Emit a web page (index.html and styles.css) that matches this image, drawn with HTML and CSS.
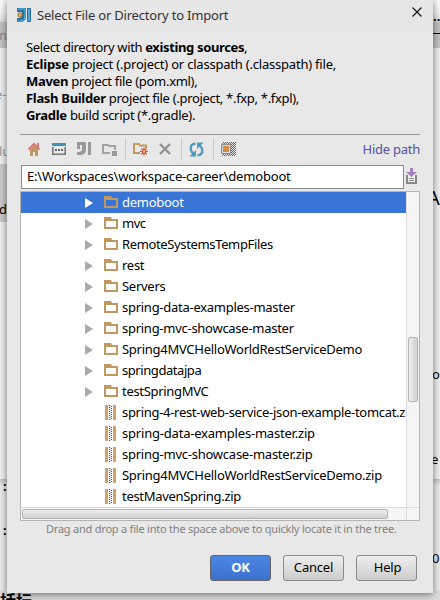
FILE: index.html
```html
<!DOCTYPE html>
<html lang="en">
<head>
<meta charset="utf-8">
<title>Select File or Directory to Import</title>
<link rel="stylesheet" href="styles.css">
</head>
<body>
<svg width="0" height="0" class="defs" aria-hidden="true">
  <symbol id="folder" viewBox="0 0 14 12"><path fill="#c09861" fill-rule="evenodd" d="M0 0h7l1 2h6v10H0zM2 4v6h10V4z"/></symbol>
  <symbol id="zip" viewBox="0 0 11 15"><path fill="#cda368" d="M0 0h3v15H0zM8 0h3v15H8z"/><path fill="none" stroke="#ddd" d="M5.5 0v15"/><path fill="none" stroke="#555" stroke-dasharray="1 1" d="M4.5 0v15M6.5 1v14"/></symbol>
  <symbol id="arrow" viewBox="0 0 8 10"><path fill="currentColor" d="M0 0l8 5-8 5z"/></symbol>
</svg>
<div class="backdrop">
  <div class="band top"></div><div class="band head"></div><div class="band side"></div><div class="band low"></div><div class="band foot"></div>
  <div class="rule"></div>
  <span class="bg b1">nt</span><span class="bg b2">e-</span><span class="bg b3">lu</span><span class="bg b4">de</span>
  <span class="bg b5">:</span><span class="bg b6">:</span><span class="bg b7">A</span><span class="bg b8">o</span><span class="bg b9">e</span><span class="bg b10">0</span><span class="bg b11">括坛</span><span class="bg b12">..</span>
</div>
<main class="dialog">
  <header class="title">
    <svg width="15" height="15" viewBox="0 0 15 15"><path d="M0 0h9v8q0 6-6 6H0v-4h2q3 0 3-3V4H0z" fill="#2575a7"/><path d="M1 1h7v7q0 5-5 5H1" fill="none" stroke="#64b7e1"/><circle cx="3" cy="7" r="2.2" fill="#edb04d" stroke="#8a6a3a"/><path d="M10.5.5h3v13h-3z" fill="#4caade" stroke="#236b9c"/></svg>
    <h1>Select File or Directory to Import</h1>
    <svg class="close" width="10" height="10" viewBox="0 0 10 10"><path d="M.5.5l9 9M9.5.5l-9 9" stroke="#111" stroke-width="1.2"/></svg>
  </header>
  <div class="desc">
    <p class="d1">Select directory with <b>existing sources</b>,</p>
    <p class="d2"><b>Eclipse</b> project (.project) or classpath (.classpath) file,</p>
    <p class="d3"><b>Maven</b> project file (pom.xml),</p>
    <p class="d4"><b>Flash Builder</b> project file (.project, *.fxp, *.fxpl),</p>
    <p class="d5"><b>Gradle</b> build script (*.gradle).</p>
  </div>
  <div class="toolbar">
    <svg width="12" height="14" viewBox="0 0 12 14"><path fill="#c09861" d="M2 7l4-4 4 4v7H7v-4H5v4H2z"/><path d="M.5 7.5L6 2l5.5 5.5" fill="none" stroke="#db7777" stroke-width="2"/><path fill="#db7777" d="M9 1h2v4H9z"/></svg>
    <svg class="i2" width="14" height="12" viewBox="0 0 14 12"><path fill="#3c91bd" d="M0 0h14v3H0z"/><path fill="none" stroke="#777" stroke-width="1.6" d="M.8 4v7.200h12.400V4"/><path fill="#666" d="M3 6h2v2H3zM6 6h2v2H6zM9 6h2v2H9z"/></svg>
    <svg class="i3" width="14" height="14" viewBox="0 0 14 14"><path fill="#999" fill-rule="evenodd" d="M0 0h9v7q0 6-6 6H0v-3h2q3 0 3-3V3H3v4H0zM11 0h3v13h-3z"/></svg>
    <svg class="i4" width="15" height="13" viewBox="0 0 15 13"><path d="M8 10H1V2h5l1 1h6v4" fill="none" stroke="#a1a1a1" stroke-width="2"/><path fill="#999" d="M10 8h5v5h-5z"/></svg>
    <i></i>
    <svg class="i5" width="16" height="14" viewBox="0 0 16 14"><path d="M7 11H1V2h5l1 1.500h6V6" fill="none" stroke="#c5985c" stroke-width="2"/><path d="M11 5.500v8M7 9.500h8M8.200 6.700l5.600 5.600M13.800 6.700l-5.600 5.600" stroke="#ce4932" stroke-width="1.200"/><circle cx="11" cy="9.500" r="1.800" fill="#efc27e" stroke="#ce4932"/></svg>
    <svg class="i6" width="12" height="12" viewBox="0 0 12 12"><path d="M1 1l10 10M11 1L1 11" stroke="#929292" stroke-width="2.4"/></svg>
    <i class="s2"></i>
    <svg class="i7" width="15" height="15" viewBox="0 0 15 15"><path d="M6.500 1.700Q1.200 2 1.700 7q.3 3 3 4.500M8.500 13.300Q13.800 13 13.300 8q-.3-3-3-4.500" fill="none" stroke="#519abf" stroke-width="2.400"/><path fill="#519abf" d="M7 8v6.500H.500zM8 7V.500h6.500z"/></svg>
    <i class="s3"></i>
    <svg class="i8" width="15" height="14" viewBox="0 0 15 14"><defs><pattern id="dots" width="2" height="2" patternUnits="userSpaceOnUse"><path fill="#666" d="M0 0h1v1H0zM1 1h1v1H1z"/></pattern></defs><path fill="url(#dots)" d="M1 0h14v14H1z"/><path fill="#ddd" stroke="#888" d="M.5 2.500h9v9h-9z"/><path fill="#d18d48" d="M2 4h6v6H2z"/></svg>
    <a>Hide path</a>
  </div>
  <div class="path">
    <div class="field"><span>E:\Workspaces\workspace-career\demoboot</span></div>
    <svg width="11" height="16" viewBox="0 0 11 16"><path d="M1 7v8h9V7" fill="#eee" stroke="#888" stroke-width="2"/><path d="M3 10.500h5M3 12.500h5" stroke="#888"/><path fill="#a67fc0" d="M4 0h3v4h4L5.500 9 0 4h4z"/></svg>
  </div>
  <section class="tree">
    <ul>
      <li class="selected"><svg class="ar"><use href="#arrow"/></svg><svg class="fo"><use href="#folder"/></svg><span class="r1">demoboot</span></li>
      <li><svg class="ar"><use href="#arrow"/></svg><svg class="fo"><use href="#folder"/></svg><span class="r2">mvc</span></li>
      <li><svg class="ar"><use href="#arrow"/></svg><svg class="fo"><use href="#folder"/></svg><span class="r3">RemoteSystemsTempFiles</span></li>
      <li><svg class="ar"><use href="#arrow"/></svg><svg class="fo"><use href="#folder"/></svg><span class="r4">rest</span></li>
      <li><svg class="ar"><use href="#arrow"/></svg><svg class="fo"><use href="#folder"/></svg><span class="r5">Servers</span></li>
      <li><svg class="ar"><use href="#arrow"/></svg><svg class="fo"><use href="#folder"/></svg><span class="r6">spring-data-examples-master</span></li>
      <li><svg class="ar"><use href="#arrow"/></svg><svg class="fo"><use href="#folder"/></svg><span class="r7">spring-mvc-showcase-master</span></li>
      <li><svg class="ar"><use href="#arrow"/></svg><svg class="fo"><use href="#folder"/></svg><span class="r8">Spring4MVCHelloWorldRestServiceDemo</span></li>
      <li><svg class="ar"><use href="#arrow"/></svg><svg class="fo"><use href="#folder"/></svg><span class="r9">springdatajpa</span></li>
      <li><svg class="ar"><use href="#arrow"/></svg><svg class="fo"><use href="#folder"/></svg><span class="r10">testSpringMVC</span></li>
      <li class="file"><svg class="zi"><use href="#zip"/></svg><span class="r11">spring-4-rest-web-service-json-example-tomcat.zip</span></li>
      <li class="file"><svg class="zi"><use href="#zip"/></svg><span class="r12">spring-data-examples-master.zip</span></li>
      <li class="file"><svg class="zi"><use href="#zip"/></svg><span class="r13">spring-mvc-showcase-master.zip</span></li>
      <li class="file"><svg class="zi"><use href="#zip"/></svg><span class="r14">Spring4MVCHelloWorldRestServiceDemo.zip</span></li>
      <li class="file"><svg class="zi"><use href="#zip"/></svg><span class="r15">testMavenSpring.zip</span></li>
    </ul>
    <div class="vbar"><div></div></div>
    <div class="hbar"><div></div></div>
    <div class="corner"></div>
  </section>
  <p class="hint">Drag and drop a file into the space above to quickly locate it in the tree.</p>
  <footer><button class="ok">OK</button><button>Cancel</button><button class="help">Help</button></footer>
</main>
</body>
</html>
```
FILE: styles.css
```css
* { box-sizing: border-box; }
body { margin: 0; width: 440px; height: 600px; overflow: hidden; position: relative; background: #f1f1f1; font: 13px/17px "Noto Sans", "Open Sans", sans-serif; color: #000; }
p, h1, ul { margin: 0; padding: 0; }
svg { display: block; flex: none; }
.defs { position: absolute; }
.backdrop { position: absolute; inset: 0; overflow: hidden; }
.band { position: absolute; left: 0; width: 440px; }
.top { top: 0; height: 22px; background: linear-gradient(#fafafa 50%, #ddd); }
.head { top: 22px; height: 26px; background: #c4c4c4; }
.side { top: 164px; height: 58px; width: 7px; background: #ccc; }
.low { top: 479px; height: 111px; background: linear-gradient(#c4c4c4, #ededed 6px); }
.foot { top: 590px; height: 10px; background: #dcdcdc; }
.rule { position: absolute; left: 433px; top: 33px; width: 7px; height: 1px; background: #000; }
.bg { position: absolute; white-space: nowrap; }
.b1 { left: -1px; top: 27px; color: #888; }
.b2 { left: -5px; top: 86px; color: #7ea5c5; }
.b3 { left: -1px; top: 143px; color: #999; }
.b4 { left: -1px; top: 201px; }
.b5 { left: 3px; top: 478px; font-weight: bold; }
.b6 { left: 3px; top: 522px; font-weight: bold; }
.b7 { left: 427px; top: 189px; font-size: 20px; }
.b8 { left: 432px; top: 366px; }
.b9 { left: 431px; top: 451px; }
.b10 { left: 432px; top: 550px; }
.b11 { left: 0; top: 592px; font: bold 16px/17px "Noto Sans CJK SC", sans-serif; }
.b12 { left: 433px; top: 8px; font-weight: bold; }
.dialog { position: relative; margin-left: 7px; width: 426px; height: 593px; padding: 0 13px; background: #e8e8e8; box-shadow: 0 1px 8px rgba(0,0,0,.55); display: flex; flex-direction: column; }
.title { height: 31px; margin: 0 -13px; padding: 0 11px 0 10px; display: flex; align-items: center; background: #e6e6e6; }
.title h1 { font: 13px/17px "Noto Sans", sans-serif; letter-spacing: -.2px; color: #333; margin-left: 5px; white-space: nowrap; }
.close { margin: -8px 0 0 auto; }
.desc { height: 103px; padding: 8px 0 0 6px; white-space: nowrap; }
.d1 { letter-spacing: -.36px; }
.d2 { letter-spacing: -.21px; }
.d3, .d5 { letter-spacing: -.3px; }
.d4 { letter-spacing: -.31px; }
.toolbar { height: 31px; border-top: 1px solid #999; display: flex; align-items: center; padding: 0 0 2px 8px; }
.toolbar i { width: 1px; height: 22px; background: #c9c9c9; margin-left: 8px; }
.toolbar a { margin-left: auto; color: #5353a3; letter-spacing: -.25px; }
.i2 { margin-left: 12px; }
.i3 { margin-left: 11px; }
.i4 { margin-left: 11px; }
.i5 { margin-left: 7px; }
.i6 { margin-left: 10px; }
.toolbar .s2 { margin-left: 10px; }
.i7 { margin-left: 7px; }
.toolbar .s3 { margin-left: 9px; }
.i8 { margin-left: 7px; }
.path { height: 26px; display: flex; align-items: center; padding-left: 1px; }
.path svg { margin: -4px 0 0 2px; }
.field { width: 383px; height: 24px; margin-top: -2px; background: #fff; border: 1px solid #8b8b8b; padding: 2px 5px; white-space: nowrap; letter-spacing: -.18px; }
.tree { height: 330px; width: 400px; border: 1px solid #b4b4b4; background: #fff; display: grid; grid-template: 315px 13px / 385px 13px; }
ul { list-style: none; overflow: hidden; white-space: nowrap; letter-spacing: -.27px; }
.r2 { letter-spacing: -.5px; }
.r3 { letter-spacing: -.36px; }
.r9 { letter-spacing: -.43px; }
.r11 { letter-spacing: -.3px; }
.r12 { letter-spacing: -.2px; }
.r13 { letter-spacing: -.24px; }
.r10, .r15 { letter-spacing: -.31px; }
li { height: 21px; display: flex; align-items: center; padding-left: 64px; }
.ar { width: 8px; height: 10px; color: #aaa; }
.fo { width: 14px; height: 12px; margin: -1px 4px 0 11px; }
.file { padding-left: 84px; }
.zi { width: 11px; height: 15px; margin-right: 6px; }
.selected { background: #3875d7; color: #fff; }
.selected .ar { color: #fff; }
.vbar { background: #f5f5f5; border-left: 1px solid #ddd; padding: 145px 1px 0; }
.vbar div { height: 65px; border: 1px solid #b6b6b6; border-radius: 2px; background: linear-gradient(90deg, #eee, #d0d0d0); }
.hbar { background: #f5f5f5; border-top: 1px solid #ddd; padding: 1px; }
.hbar div { width: 366px; height: 10px; border: 1px solid #b6b6b6; border-radius: 2px; background: linear-gradient(#eee, #d0d0d0); }
.corner { background: #f5f5f5; border-top: 1px solid #ddd; border-left: 1px solid #ddd; }
.hint { font-size: 11px; line-height: 15px; letter-spacing: -.22px; color: #808080; padding-left: 26px; white-space: nowrap; }
footer { display: flex; gap: 12px; padding: 19px 0 0 190px; }
button { width: 61px; height: 26px; padding: 0 0 1px; border: 1px solid #8a8a8a; border-radius: 3px; background: linear-gradient(#eee, #ccc); font: 13px/17px "Noto Sans", sans-serif; letter-spacing: -.2px; color: #000; }
.help { padding-left: 2px; }
.ok { color: #fff; font-weight: bold; background: linear-gradient(#4a86e4, #3d72cc); border-color: #666; }
```
